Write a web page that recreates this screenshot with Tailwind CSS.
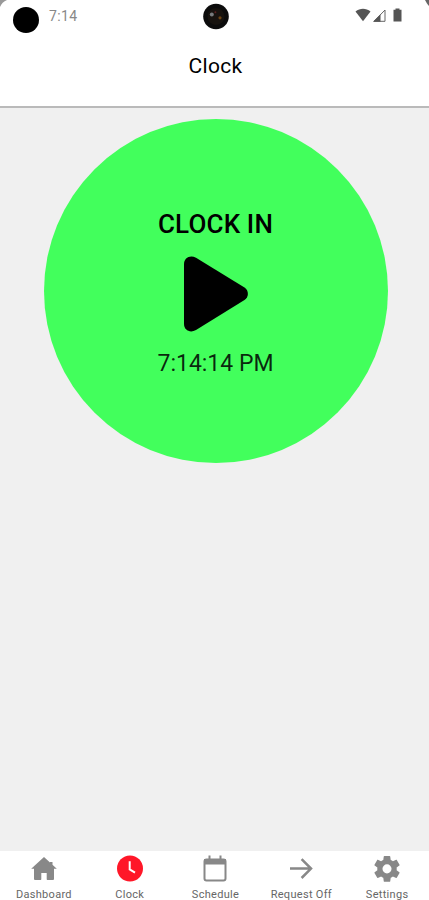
<!DOCTYPE html>
<html lang="en">
<head>
    <meta charset="UTF-8">
    <meta name="viewport" content="width=device-width, initial-scale=1.0">
    <title>Clock</title>
    <script src="https://cdn.jsdelivr.net/npm/@tailwindcss/browser@4"></script>
</head>
<body class="bg-[#f0f0f0] font-['Roboto',sans-serif] text-black">
    <div class="relative flex flex-col h-[900px] w-[429px] overflow-hidden">
        <!-- Screen corners -->
        <svg class="absolute top-0 left-0 z-10" width="429" height="9" viewBox="0 0 429 9">
            <path d="M0 0H7Q2 2 0 7Z" fill="#999"/>
            <path d="M429 0H425Q427 4 429 6Z" fill="#666"/>
        </svg>

        <header class="h-[108px] shrink-0 bg-white border-b-2 border-[#bababa]">
            <!-- Status bar -->
            <div class="flex items-start h-[34px]">
                <div class="w-[26px] h-[26px] mt-[7px] ml-[13px] rounded-full bg-black"></div>
                <span class="w-[30px] mt-[7px] ml-[10px] text-[14px] leading-[18px] tracking-[0.4px] text-[#888]">7:14</span>
                <svg class="mt-[3px] ml-[124px]" width="26" height="27" viewBox="0 0 26 27">
                    <circle cx="13" cy="13.5" r="12.8" fill="#0c0c0c"/>
                    <circle cx="13" cy="13.5" r="8.5" fill="#17130f"/>
                    <circle cx="8.8" cy="11.5" r="2" fill="#777b7d"/>
                    <circle cx="12.4" cy="9.3" r="1" fill="#5c2020"/>
                    <circle cx="17" cy="14.8" r="1.6" fill="#6c4312"/>
                </svg>
                <svg class="mt-[7px] ml-[126px]" width="48" height="16" viewBox="0 0 48 16">
                    <path d="M0.5 4.5C5 .9 11 .9 15.5 4.5L8 14.3Z" fill="#555"/>
                    <path d="M19 14.3L30 3V14.3Z" fill="none" stroke="#666" stroke-width="1"/>
                    <path d="M18 14.8L25.5 7.2V14.8Z" fill="#555"/>
                    <path d="M38.5 2.8H40.5V1.5H44.5V2.8H46.5V14.5H38.5Z" fill="#555"/>
                </svg>
            </div>
            <h1 class="mt-[18px] pl-[2px] text-center text-[21px] leading-[28px] font-normal tracking-[0.3px]">Clock</h1>
        </header>

        <main class="flex-1 flex flex-col items-center pt-[11px] pl-[2px]">
            <button class="flex flex-col items-center w-[344px] h-[344px] rounded-full bg-[#42ff5c]">
                <span class="mt-[88px] text-[26px] leading-[34px] font-medium tracking-[0.15px] whitespace-nowrap">CLOCK IN</span>
                <svg class="mt-[15px]" width="64" height="76" viewBox="0 0 64 76">
                    <path d="M0 8C0 2 6-1.5 12 1.8L60.5 31.5C65 34.5 65 41 60.5 44L12 74C6 77.5 0 74 0 68Z" fill="#000"/>
                </svg>
                <span class="mt-[16px] text-[23px] leading-[32px] font-normal text-black/85 whitespace-nowrap">7:14:14 PM</span>
            </button>
        </main>

        <!-- Tab bar -->
        <nav class="grid grid-cols-5 h-[49px] shrink-0 pl-[1px] -mr-[1px] bg-white text-[#888]">
            <a class="flex flex-col items-center pt-[4px]">
                <svg width="28" height="28" viewBox="0 0 28 28" fill="currentColor">
                    <path d="M14 2L1.2 13.8H4V24Q4 25 5 25H10.6Q11.3 25 11.3 24.3V18H16.7V24.3Q16.7 25 17.4 25H23Q24 25 24 24V13.8H26.8L22.5 9.8V7H20V7.5Z"/>
                </svg>
                <span class="mt-[5px] text-[11px] leading-[14px] tracking-[0.3px] text-[#666]">Dashboard</span>
            </a>
            <a class="flex flex-col items-center pt-[4px]">
                <svg width="28" height="28" viewBox="0 0 28 28">
                    <circle cx="14" cy="13.5" r="13" fill="#ff1728"/>
                    <path d="M13.7 6.2V14.4L19 17.6" fill="none" stroke="#fff" stroke-width="2"/>
                </svg>
                <span class="mt-[5px] text-[11px] leading-[14px] tracking-[0.3px] text-[#666]">Clock</span>
            </a>
            <a class="flex flex-col items-center pt-[4px]">
                <svg width="28" height="28" viewBox="0 0 28 28">
                    <rect x="3.5" y="4.5" width="21" height="21" rx="2" fill="none" stroke="currentColor" stroke-width="2"/>
                    <path d="M3 4H25V9.5H3ZM7.5 0.5H9.5V5H7.5ZM18.5 0.5H20.5V5H18.5Z" fill="currentColor"/>
                </svg>
                <span class="mt-[5px] text-[11px] leading-[14px] tracking-[0.3px] text-[#666]">Schedule</span>
            </a>
            <a class="flex flex-col items-center pt-[4px]">
                <svg width="28" height="28" viewBox="0 0 28 28">
                    <path d="M3 13.6H24M14.6 4.2L24 13.6L14.6 23" fill="none" stroke="currentColor" stroke-width="2.5"/>
                </svg>
                <span class="mt-[5px] text-[11px] leading-[14px] tracking-[0.3px] text-[#666] whitespace-nowrap">Request Off</span>
            </a>
            <a class="flex flex-col items-center pt-[4px]">
                <svg width="28" height="28" viewBox="1.2 1.3 21.6 21.6" fill="currentColor">
                    <path d="M12 15.5A3.5 3.5 0 0 1 8.5 12 3.5 3.5 0 0 1 12 8.5 3.5 3.5 0 0 1 15.5 12 3.5 3.5 0 0 1 12 15.5M19.43 12.97C19.47 12.65 19.5 12.33 19.5 12S19.47 11.34 19.43 11L21.54 9.37C21.73 9.22 21.78 8.95 21.66 8.73L19.66 5.27C19.54 5.05 19.27 4.96 19.05 5.05L16.56 6.05C16.04 5.66 15.5 5.32 14.87 5.07L14.5 2.42C14.46 2.18 14.25 2 14 2H10C9.75 2 9.54 2.18 9.5 2.42L9.13 5.07C8.5 5.32 7.96 5.66 7.44 6.05L4.95 5.05C4.73 4.96 4.46 5.05 4.34 5.27L2.34 8.73C2.21 8.95 2.27 9.22 2.46 9.37L4.57 11C4.53 11.34 4.5 11.67 4.5 12S4.53 12.65 4.57 12.97L2.46 14.63C2.27 14.78 2.21 15.05 2.34 15.27L4.34 18.73C4.46 18.95 4.73 19.03 4.95 18.95L7.44 17.94C7.96 18.34 8.5 18.68 9.13 18.93L9.5 21.58C9.54 21.82 9.75 22 10 22H14C14.25 22 14.46 21.82 14.5 21.58L14.87 18.93C15.5 18.67 16.04 18.34 16.56 17.94L19.05 18.95C19.27 19.03 19.54 18.95 19.66 18.73L21.66 15.27C21.78 15.05 21.73 14.78 21.54 14.63Z"/>
                </svg>
                <span class="mt-[5px] text-[11px] leading-[14px] tracking-[0.3px] text-[#666]">Settings</span>
            </a>
        </nav>
    </div>
</body>
</html>
